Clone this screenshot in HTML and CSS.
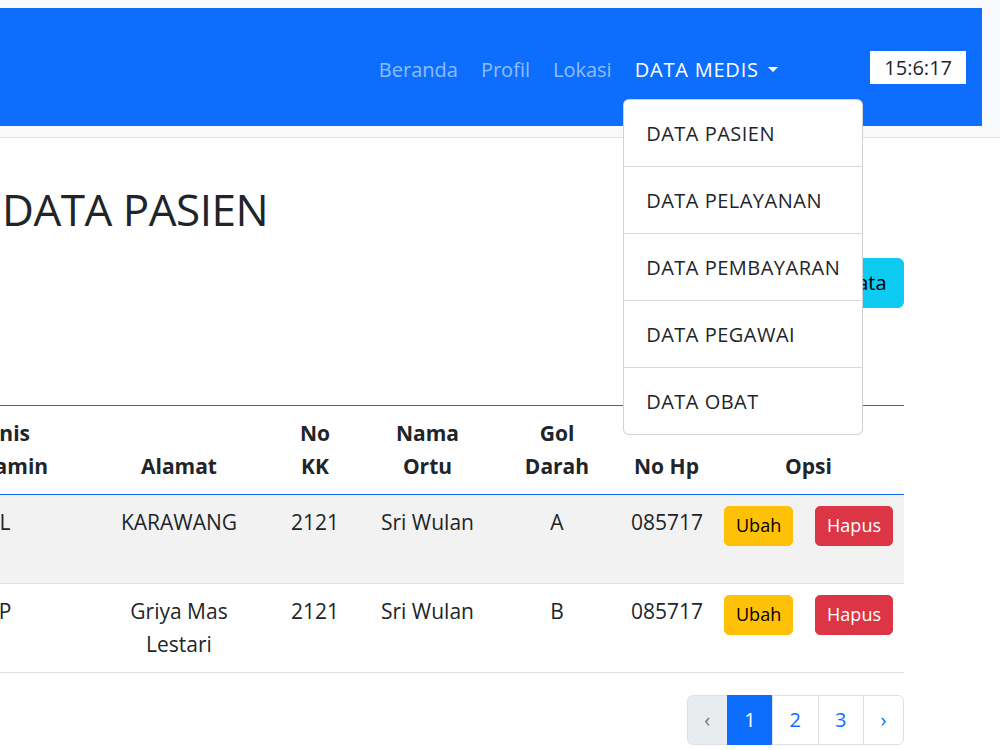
FILE: index.html
```html
<!DOCTYPE html>
<html>

<head>
  <meta name="viewport" content="width=device-width, initial-scale=1" />
  <link rel="stylesheet" href="styles.css">
</head>

<body>
  <div class="topbar">
    <nav class="navbar">
      <ul class="nav">
        <li><a class="nav-link" href="#">Beranda</a></li>
        <li><a class="nav-link" href="#">Profil</a></li>
        <li><a class="nav-link" href="#">Lokasi</a></li>
        <li class="dropdown">
          <a class="nav-link active dropdown-toggle" href="#">DATA MEDIS</a>
          <ul class="dropdown-menu">
            <li><a class="dropdown-item" href="#">DATA PASIEN</a></li>
            <li><hr class="dropdown-divider"></li>
            <li><a class="dropdown-item" href="#">DATA PELAYANAN</a></li>
            <li><hr class="dropdown-divider"></li>
            <li><a class="dropdown-item" href="#">DATA PEMBAYARAN</a></li>
            <li><hr class="dropdown-divider"></li>
            <li><a class="dropdown-item" href="#">DATA PEGAWAI</a></li>
            <li><hr class="dropdown-divider"></li>
            <li><a class="dropdown-item" href="#">DATA OBAT</a></li>
          </ul>
        </li>
      </ul>
      <span class="clock" id="jam">15:6:17</span>
    </nav>
  </div>

  <div class="content">
    <h1 class="page-title">DATA PASIEN</h1>

    <div class="toolbar">
      <a class="btn btn-info" href="#">Tambah Data</a>
    </div>

    <div class="table-wrap">
      <table class="table">
        <thead>
          <tr>
            <th class="col-no">No</th>
            <th class="col-nama">Nama</th>
            <th class="col-jk">Jenis<br>Kelamin</th>
            <th class="col-alamat">Alamat</th>
            <th class="col-kk">No<br>KK</th>
            <th class="col-ortu">Nama<br>Ortu</th>
            <th class="col-gol">Gol<br>Darah</th>
            <th class="col-hp">No Hp</th>
            <th class="col-opsi">Opsi</th>
          </tr>
        </thead>
        <tbody>
          <tr>
            <td>1</td>
            <td>Muhammad Rizki Pratama</td>
            <td>L</td>
            <td>KARAWANG</td>
            <td>2121</td>
            <td>Sri Wulan</td>
            <td>A</td>
            <td>085717</td>
            <td>
              <div class="actions">
                <a class="btn btn-sm btn-warning" href="#">Ubah</a>
                <a class="btn btn-sm btn-danger" href="#">Hapus</a>
              </div>
            </td>
          </tr>
          <tr>
            <td>2</td>
            <td>Dewi Anggraini</td>
            <td>P</td>
            <td>Griya Mas Lestari</td>
            <td>2121</td>
            <td>Sri Wulan</td>
            <td>B</td>
            <td>085717</td>
            <td>
              <div class="actions">
                <a class="btn btn-sm btn-warning" href="#">Ubah</a>
                <a class="btn btn-sm btn-danger" href="#">Hapus</a>
              </div>
            </td>
          </tr>
        </tbody>
      </table>
    </div>

    <ul class="pagination">
      <li class="page-item disabled"><a class="page-link" href="#">&lsaquo;</a></li>
      <li class="page-item active"><a class="page-link" href="#">1</a></li>
      <li class="page-item"><a class="page-link" href="#">2</a></li>
      <li class="page-item"><a class="page-link" href="#">3</a></li>
      <li class="page-item"><a class="page-link" href="#">&rsaquo;</a></li>
    </ul>
  </div>
</body>

</html>
```

FILE: styles.css
```css
body {
  margin: 0;
  font-family: "Open Sans", "Noto Sans", sans-serif;
  font-size: 20px;
  line-height: 33px;
  color: #212529;
  background: #fff;
}

a {
  text-decoration: none;
}

/* navbar */
.topbar {
  background: #f8f9fa;
  border-bottom: 1px solid #dee2e6;
  padding: 8px 18px 11px 0;
}

.navbar {
  display: flex;
  justify-content: flex-end;
  align-items: center;
  background: #0d6efd;
  padding: 34px 16px 29px 0;
}

.nav {
  display: flex;
  list-style: none;
  margin: 0;
  padding: 0;
}

.nav-link {
  display: block;
  padding: 11px 11.5px;
  color: rgba(255, 255, 255, 0.55);
}

.nav-link.active {
  color: #fff;
}

.dropdown {
  position: relative;
}

.dropdown-toggle {
  letter-spacing: 0.8px;
}

.dropdown-toggle::after {
  content: "";
  display: inline-block;
  margin-left: 0.45em;
  vertical-align: 0.26em;
  border-top: 0.28em solid;
  border-right: 0.28em solid transparent;
  border-left: 0.28em solid transparent;
}

.dropdown-menu {
  position: absolute;
  top: 100%;
  left: 0;
  z-index: 10;
  margin: 2px 0 0;
  padding: 11px 0;
  list-style: none;
  background: #fff;
  border: 1px solid rgba(0, 0, 0, 0.175);
  border-radius: 6px;
  white-space: nowrap;
}

.dropdown-item {
  display: block;
  padding: 5.5px 22px;
  color: #212529;
  letter-spacing: 0.5px;
}

.dropdown-divider {
  margin: 11px 0;
  border: 0;
  border-top: 1px solid rgba(0, 0, 0, 0.15);
}

.clock {
  margin: 0 0 4px 81px;
  padding: 0 14px;
  background: #fff;
  color: #212529;
}

/* content */
.content {
  padding: 0 96px 0 0;
}

.page-title {
  margin: 45px 0 0 2px;
  font-size: 44px;
  font-weight: 500;
  line-height: 1.2;
  letter-spacing: -0.5px;
}

.toolbar {
  display: flex;
  justify-content: flex-end;
  margin: 22px 0 97px;
}

.btn {
  display: inline-block;
  padding: 7.5px 16.5px;
  border: 1px solid transparent;
  border-radius: 6px;
  color: #000;
}

.btn-info {
  background: #0dcaf0;
  border-color: #0dcaf0;
}

.btn-sm {
  padding: 5.5px 11px;
  font-size: 18px;
  line-height: 27px;
  border-radius: 5px;
}

.btn-warning {
  background: #ffc107;
  border-color: #ffc107;
  color: #000;
}

.btn-danger {
  background: #dc3545;
  border-color: #dc3545;
  color: #fff;
}

/* table */
.table-wrap {
  display: flex;
  justify-content: flex-end;
  overflow: hidden;
  margin-bottom: 22px;
}

.table {
  flex-shrink: 0;
  width: 1233px;
  table-layout: fixed;
  border-collapse: collapse;
  font-size: 21px;
}

.table thead tr {
  border-top: 1px solid #0d6efd;
}

.table th,
.table td {
  box-sizing: border-box;
  padding: 11px;
  text-align: center;
  border-bottom: 1px solid #dee2e6;
}

.table th {
  vertical-align: bottom;
  font-weight: 700;
  border-bottom-color: #0d6efd;
}

.table td {
  vertical-align: top;
}

.table tbody tr:nth-child(odd) td {
  background: #f2f2f2;
}

.col-no { width: 60px; }
.col-nama { width: 190px; }
.col-jk { width: 168px; }
.col-alamat { width: 180px; }
.col-kk { width: 92px; }
.col-ortu { width: 133px; }
.col-gol { width: 126px; }
.col-hp { width: 93px; }
.col-opsi { width: 191px; }

.actions {
  display: flex;
  justify-content: space-between;
}

/* pagination */
.pagination {
  display: flex;
  justify-content: flex-end;
  list-style: none;
  margin: 0;
  padding: 0;
}

.page-link {
  display: block;
  margin-left: -1px;
  padding: 7.5px 16.5px;
  color: #0d6efd;
  background: #fff;
  border: 1px solid #dee2e6;
}

.page-item:first-child .page-link {
  margin-left: 0;
  border-radius: 6px 0 0 6px;
}

.page-item:last-child .page-link {
  border-radius: 0 6px 6px 0;
}

.page-item.active .page-link {
  color: #fff;
  background: #0d6efd;
  border-color: #0d6efd;
}

.page-item.disabled .page-link {
  color: #6c757d;
  background: #e9ecef;
}
```
